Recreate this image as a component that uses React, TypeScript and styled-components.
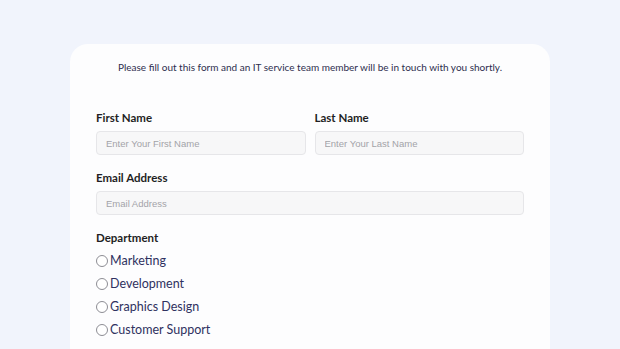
import styled, { createGlobalStyle } from 'styled-components';

const GlobalStyle = createGlobalStyle`
  html, body {
    margin: 0;
    padding: 0;
    background: #f1f4fc;
    font-family: Lato, 'Open Sans', sans-serif;
  }
`;

const Page = styled.div`
  width: 620px;
  height: 349px;
  overflow: hidden;
  padding-top: 44px;
  box-sizing: border-box;
  display: flex;
  justify-content: center;
`;

const Card = styled.div`
  width: 480px;
  height: 340px;
  background: #fdfdfe;
  border-radius: 18px;
  padding: 16px 26px 0;
  box-sizing: border-box;
`;

const Intro = styled.p`
  margin: 0 0 37px;
  text-align: center;
  font-size: 10px;
  line-height: 14px;
  color: #2d2e4e;
`;

const Row = styled.div`
  display: grid;
  grid-template-columns: 1fr 1fr;
  gap: 9px;
  margin-bottom: 16px;
`;

const Field = styled.div<{ $spaced?: boolean }>`
  display: flex;
  flex-direction: column;
  margin-top: ${(p) => (p.$spaced ? '16px' : '0')};
`;

const Label = styled.label`
  font-size: 11.5px;
  line-height: 14px;
  font-weight: 700;
  color: #1f1f24;
  margin-bottom: 6px;
`;

const Input = styled.input`
  height: 24px;
  box-sizing: border-box;
  border: 1px solid #e6e6e9;
  border-radius: 4px;
  background: #f7f7f8;
  padding: 0 9px;
  font-family: 'Liberation Sans', Arial, sans-serif;
  font-size: 9.5px;
  color: #333;
  outline: none;
  &::placeholder {
    color: #a3a3a8;
  }
`;

const Options = styled.div`
  display: flex;
  flex-direction: column;
  margin-top: -2px;
`;

const Option = styled.label`
  height: 23px;
  display: flex;
  align-items: center;
  gap: 2px;
  font-size: 12.5px;
  color: #2f3160;
`;

const Radio = styled.span`
  width: 10px;
  height: 10px;
  border: 1px solid #8d8d94;
  border-radius: 50%;
  background: #fff;
`;

const departments = ['Marketing', 'Development', 'Graphics Design', 'Customer Support'];

const App = () => {
  return (
    <>
      <GlobalStyle />
      <Page>
        <Card>
          <Intro>
            Please fill out this form and an IT service team member will be in touch with you shortly.
          </Intro>
          <Row>
            <Field>
              <Label>First Name</Label>
              <Input placeholder="Enter Your First Name" />
            </Field>
            <Field>
              <Label>Last Name</Label>
              <Input placeholder="Enter Your Last Name" />
            </Field>
          </Row>
          <Field>
            <Label>Email Address</Label>
            <Input placeholder="Email Address" />
          </Field>
          <Field $spaced>
            <Label>Department</Label>
            <Options>
              {departments.map((d) => (
                <Option key={d}>
                  <Radio />
                  {d}
                </Option>
              ))}
            </Options>
          </Field>
        </Card>
      </Page>
    </>
  );
};

export default App;
